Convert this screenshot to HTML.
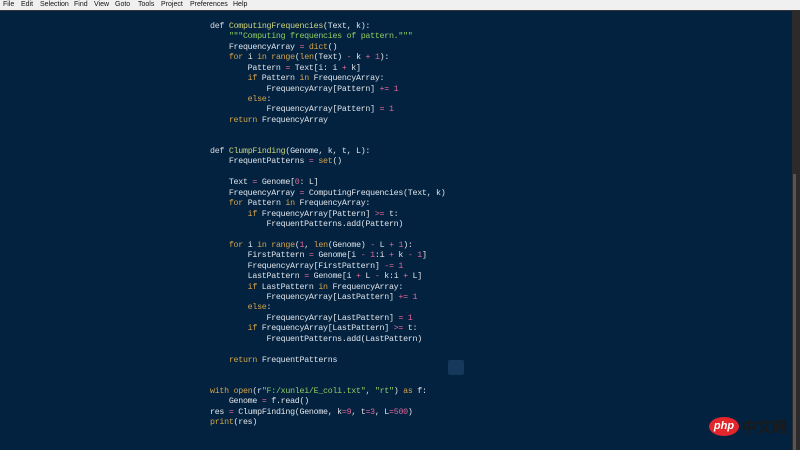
<!DOCTYPE html>
<html><head><meta charset="utf-8"><style>
html,body{margin:0;padding:0;width:800px;height:450px;overflow:hidden;background:#03223f;}
#menu{position:absolute;left:0;top:0;width:800px;height:10px;background:#f0f0f0;border-bottom:1px solid #333;font:7px "Liberation Sans",sans-serif;color:#111;}
#menu span{position:absolute;top:1px;}
#sb{position:absolute;left:792px;top:11px;width:8px;height:439px;background:#2c2a2a;}
#sb2{position:absolute;left:793px;top:174px;width:3px;height:276px;background:#555;}
pre{position:absolute;left:210px;top:22px;margin:0;font:8.3px/10.42px "Liberation Mono",monospace;letter-spacing:-0.27px;color:#dfe4ea;}
.k{color:#d7a44a}.o{color:#e2679a}.f{color:#cfd47a}.s{color:#8fce62}.d{color:#d8d8e0}
#ic{position:absolute;left:448px;top:360px;width:16px;height:15px;background:#16385a;border-radius:2px;}
#php{position:absolute;left:709px;top:417px;width:30px;height:19px;border-radius:50%;background:#e2262b;color:#fff;font:italic bold 11px "Liberation Sans",sans-serif;text-align:center;line-height:18px;}
#cn{position:absolute;left:742px;top:418px;font:bold 15px "Noto Sans CJK SC",sans-serif;color:#1a1a1a;line-height:17px;}
</style></head><body>
<div id="menu"><span style="left:3px">File</span><span style="left:21px">Edit</span><span style="left:40px">Selection</span><span style="left:74px">Find</span><span style="left:94px">View</span><span style="left:115px">Goto</span><span style="left:138px">Tools</span><span style="left:161px">Project</span><span style="left:190px">Preferences</span><span style="left:233px">Help</span></div>
<div id="sb"></div><div id="sb2"></div>
<pre><span class="d">def</span> <span class="f">ComputingFrequencies</span>(Text, k):
    <span class="s">"""Computing frequencies of pattern."""</span>
    FrequencyArray <span class="o">=</span> <span class="k">dict</span>()
    <span class="k">for</span> i <span class="k">in</span> <span class="k">range</span>(<span class="k">len</span>(Text) <span class="o">-</span> k <span class="o">+</span> <span class="o">1</span>):
        Pattern <span class="o">=</span> Text[i: i <span class="o">+</span> k]
        <span class="k">if</span> Pattern <span class="k">in</span> FrequencyArray:
            FrequencyArray[Pattern] <span class="o">+=</span> <span class="o">1</span>
        <span class="k">else</span>:
            FrequencyArray[Pattern] <span class="o">=</span> <span class="o">1</span>
    <span class="k">return</span> FrequencyArray


<span class="d">def</span> <span class="f">ClumpFinding</span>(Genome, k, t, L):
    FrequentPatterns <span class="o">=</span> <span class="k">set</span>()

    Text <span class="o">=</span> Genome[<span class="o">0</span>: L]
    FrequencyArray <span class="o">=</span> ComputingFrequencies(Text, k)
    <span class="k">for</span> Pattern <span class="k">in</span> FrequencyArray:
        <span class="k">if</span> FrequencyArray[Pattern] <span class="o">&gt;=</span> t:
            FrequentPatterns.add(Pattern)

    <span class="k">for</span> i <span class="k">in</span> <span class="k">range</span>(<span class="o">1</span>, <span class="k">len</span>(Genome) <span class="o">-</span> L <span class="o">+</span> <span class="o">1</span>):
        FirstPattern <span class="o">=</span> Genome[i <span class="o">-</span> <span class="o">1</span>:i <span class="o">+</span> k <span class="o">-</span> <span class="o">1</span>]
        FrequencyArray[FirstPattern] <span class="o">-=</span> <span class="o">1</span>
        LastPattern <span class="o">=</span> Genome[i <span class="o">+</span> L <span class="o">-</span> k:i <span class="o">+</span> L]
        <span class="k">if</span> LastPattern <span class="k">in</span> FrequencyArray:
            FrequencyArray[LastPattern] <span class="o">+=</span> <span class="o">1</span>
        <span class="k">else</span>:
            FrequencyArray[LastPattern] <span class="o">=</span> <span class="o">1</span>
        <span class="k">if</span> FrequencyArray[LastPattern] <span class="o">&gt;=</span> t:
            FrequentPatterns.add(LastPattern)

    <span class="k">return</span> FrequentPatterns


<span class="k">with</span> <span class="k">open</span>(r<span class="s">"F:/xunlei/E_coli.txt"</span>, <span class="s">"rt"</span>) <span class="k">as</span> f:
    Genome <span class="o">=</span> f.read()
res <span class="o">=</span> ClumpFinding(Genome, k<span class="o">=</span><span class="o">9</span>, t<span class="o">=</span><span class="o">3</span>, L<span class="o">=</span><span class="o">500</span>)
<span class="k">print</span>(res)</pre>
<div id="ic"></div>
<div id="php">php</div><div id="cn">中文网</div>
</body></html>
